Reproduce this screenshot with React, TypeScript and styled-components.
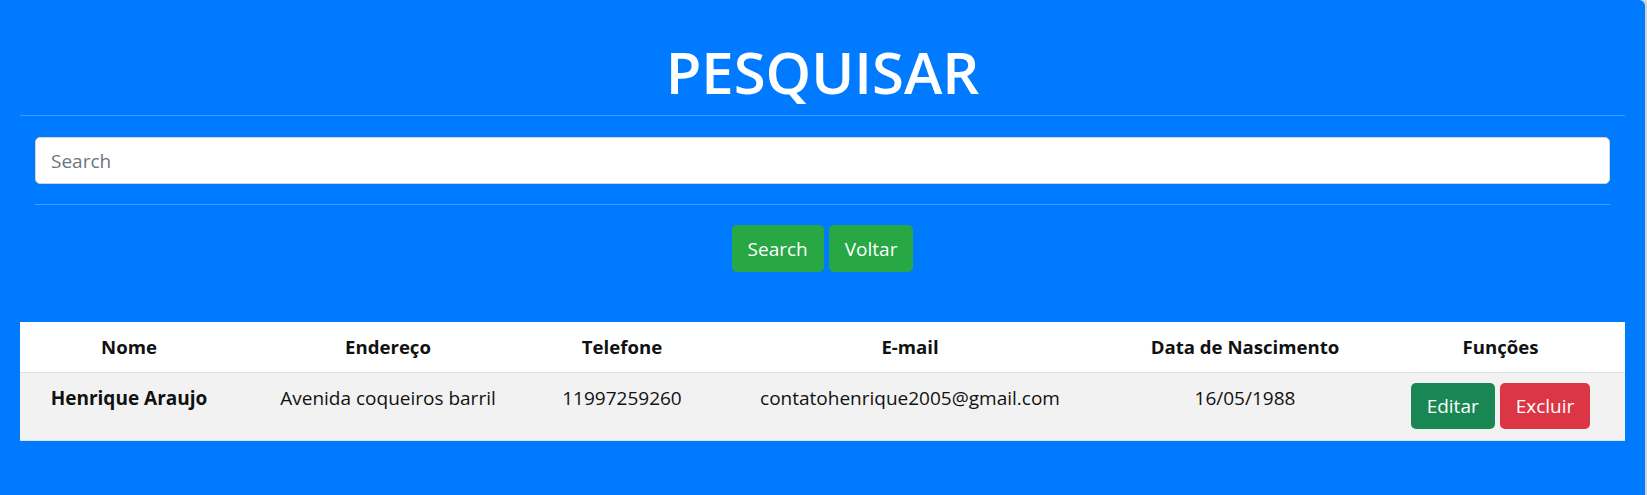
import React from 'react'
import styled, { createGlobalStyle } from 'styled-components'

const GlobalStyle = createGlobalStyle`
  * { box-sizing: border-box; }
  body {
    margin: 0;
    background: #d4d4d4;
    font-family: "Open Sans", "Noto Sans", sans-serif;
  }
`

const Card = styled.div`
  width: 1645px;
  min-height: 100vh;
  background: #007bff;
  color: #fff;
  border-radius: 0 6px 0 0;
  padding: 0 20px;
  display: flex;
  flex-direction: column;
`

const Title = styled.h1`
  margin: 37px 0 8px;
  font-size: 58px;
  line-height: 70px;
  font-weight: 600;
  text-align: center;
`

const Rule = styled.hr<{ $inset?: boolean }>`
  margin: 0 ${(p) => (p.$inset ? '15px' : '0')};
  border: 0;
  border-top: 1px solid rgba(255, 255, 255, 0.25);
  height: 0;
`

const SearchInput = styled.input`
  margin: 21px 15px 20px;
  height: 47px;
  padding: 0 15px;
  border: 1px solid #ced4da;
  border-radius: 5px;
  font-family: inherit;
  font-size: 19px;
  color: #212529;
  outline: none;
  &::placeholder { color: #6c757d; }
`

const Actions = styled.div`
  display: flex;
  justify-content: center;
  gap: 5px;
  margin: 20px 0 50px;
`

const Button = styled.button<{ $tone: 'success' | 'dark' | 'danger'; $h?: number }>`
  height: ${(p) => p.$h ?? 47}px;
  padding: 0 15px;
  border: 1px solid transparent;
  border-radius: 5px;
  font-family: inherit;
  font-size: 19px;
  color: #fff;
  cursor: pointer;
  background: ${(p) =>
    p.$tone === 'success' ? '#28a745' : p.$tone === 'dark' ? '#198754' : '#dc3545'};
`

const Table = styled.table`
  width: 1605px;
  table-layout: fixed;
  border-collapse: collapse;
  color: #111;
`

const Head = styled.th`
  background: #fff;
  padding: 12px;
  line-height: 26px;
  font-size: 18.6px;
  font-weight: 700;
  text-align: center;
  border-bottom: 1px solid #dee2e6;
`

const Cell = styled.td<{ $bold?: boolean }>`
  background: #f2f2f2;
  padding: 12px;
  line-height: 26px;
  font-size: 19px;
  font-weight: ${(p) => (p.$bold ? 700 : 400)};
  text-align: center;
  vertical-align: top;
  border-bottom: 1px solid #dee2e6;
`

const ActionCell = styled(Cell)`
  padding: 10px 12px 11px;
`

const CellButtons = styled.div`
  display: flex;
  justify-content: center;
  gap: 5px;
`

const widths = [218, 300, 168, 408, 262, 249]

const App: React.FC = () => {
  return (
    <>
      <GlobalStyle />
      <Card>
        <Title>PESQUISAR</Title>
        <Rule />
        <SearchInput type="text" placeholder="Search" />
        <Rule $inset />
        <Actions>
          <Button $tone="success">Search</Button>
          <Button $tone="success">Voltar</Button>
        </Actions>
        <Table>
          <colgroup>
            {widths.map((w, i) => (
              <col key={i} style={{ width: w }} />
            ))}
          </colgroup>
          <thead>
            <tr>
              <Head>Nome</Head>
              <Head>Endereço</Head>
              <Head>Telefone</Head>
              <Head>E-mail</Head>
              <Head>Data de Nascimento</Head>
              <Head>Funções</Head>
            </tr>
          </thead>
          <tbody>
            <tr>
              <Cell $bold>Henrique Araujo</Cell>
              <Cell>Avenida coqueiros barril</Cell>
              <Cell>11997259260</Cell>
              <Cell>contatohenrique2005@gmail.com</Cell>
              <Cell>16/05/1988</Cell>
              <ActionCell>
                <CellButtons>
                  <Button $tone="dark" $h={46}>Editar</Button>
                  <Button $tone="danger" $h={46}>Excluir</Button>
                </CellButtons>
              </ActionCell>
            </tr>
          </tbody>
        </Table>
      </Card>
    </>
  )
}

export default App
